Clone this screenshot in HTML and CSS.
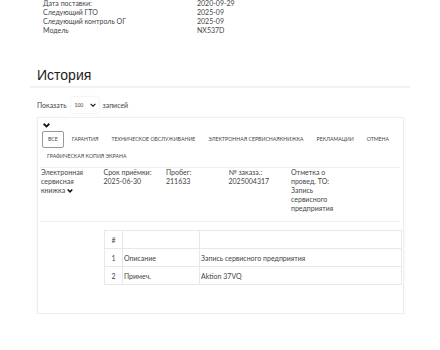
FILE: index.html
```html
<!DOCTYPE html>
<html lang="ru">
<head>
  <meta charset="UTF-8" />
  <meta name="viewport" content="width=device-width, initial-scale=1.0" />
  <title>История</title>
  <link rel="stylesheet" href="styles.css">
</head>
<body>
  <div class="details">
    <span>Дата поставки:</span><span>2020-09-29</span>
    <span>Следующий ГТО</span><span>2025-09</span>
    <span>Следующий контроль ОГ</span><span>2025-09</span>
    <span>Модель</span><span>NX537D</span>
  </div>

  <section class="history">
    <h2>История</h2>
    <div class="body">
      <div class="length">
        Показать
        <span class="select">100 <svg viewBox="0 0 10 6" width="6" height="4"><path d="M1 1l4 4 4-4" fill="none" stroke="#222" stroke-width="2"/></svg></span>
        записей
      </div>

      <div class="card">
        <div class="top">
          <svg class="chev" viewBox="0 0 10 7" width="7" height="5"><path d="M1 1l4 4 4-4" fill="none" stroke="#111" stroke-width="2.6"/></svg>
          <div class="tabs">
            <span class="tab active">Все</span>
            <span class="tab">Гарантия</span>
            <span class="tab">Техническое обслуживание</span>
            <span class="tab">Электронная сервиснаякнижка</span>
            <span class="tab">Рекламации</span>
            <span class="tab">Отмена</span>
            <span class="tab">Графическая копия экрана</span>
          </div>
        </div>

        <div class="entry">
          <div>Электронная сервисная книжка <svg viewBox="0 0 10 7" width="6" height="4"><path d="M1 1l4 4 4-4" fill="none" stroke="#111" stroke-width="2.6"/></svg></div>
          <div>Срок приёмки: 2025-06-30</div>
          <div>Пробег: 211633</div>
          <div>№ заказа.: 2025004317</div>
          <div>Отметка о провед. ТО: Запись сервисного предприятия</div>
        </div>

        <table class="lines">
          <tr><th>#</th><th></th><th></th></tr>
          <tr><td>1</td><td>Описание</td><td>Запись сервисного предприятия</td></tr>
          <tr><td>2</td><td>Примеч.</td><td>Aktion 37VQ</td></tr>
        </table>
      </div>
    </div>
  </section>
</body>
</html>
```

FILE: styles.css
```css
body {
  margin: 0;
  font-family: Lato, 'Noto Sans', sans-serif;
  font-size: 7px;
  color: #444;
  background: #fff;
}
.details {
  display: grid;
  grid-template-columns: 154px auto;
  line-height: 9px;
  margin-top: -1px;
  padding-left: 43px;
}
.history {
  margin: 30px 30px 0;
}
.history h2 {
  margin: 0;
  padding: 0 0 1px 7px;
  font-family: 'Liberation Sans', Arial, sans-serif;
  font-weight: normal;
  font-size: 14px;
  line-height: 20px;
  color: #222;
  border-bottom: 2px solid #eef3f3;
}
.body {
  margin: 0 6px 0 7px;
}
.length {
  display: flex;
  align-items: center;
  gap: 4px;
  height: 16px;
  margin: 9px 0 4px;
}
.select {
  display: inline-flex;
  align-items: center;
  justify-content: space-between;
  width: 28px;
  height: 16px;
  box-sizing: border-box;
  padding: 0 3px 0 4px;
  font-size: 5px;
  border-radius: 2px;
  box-shadow: 0 0 2px rgba(0,0,0,0.15);
}
.card {
  border: 1px solid #eee;
  box-shadow: 0 1px 3px rgba(0,0,0,0.06);
  padding: 0 3px 28px 2px;
}
.top {
  padding: 5px 0 0 2px;
  border-bottom: 1px solid #efefef;
}
.chev {
  display: block;
  margin-left: 1px;
}
.tabs {
  display: flex;
  flex-wrap: wrap;
  gap: 0 3px;
  margin: 3px 0 2px;
}
.tab {
  padding: 4px;
  line-height: 7px;
  font-size: 5.2px;
  text-transform: uppercase;
  color: #444;
  border: 1px solid transparent;
}
.tab.active {
  padding: 4px 5px;
  border-color: #999;
  border-radius: 2px;
}
.entry {
  display: grid;
  grid-template-columns: repeat(5, 62.5px);
  line-height: 9px;
  padding: 0 0 8px 1px;
  border-bottom: 1px solid #f0f0f0;
}
.entry > div {
  padding-right: 12px;
}
.lines {
  margin: 8px 0 0 64px;
  width: 298px;
  border-collapse: collapse;
}
.lines th, .lines td {
  height: 17px;
  padding: 0 1px;
  border: 1px solid #e8e8e8;
  text-align: left;
  font-weight: normal;
}
.lines th:first-child, .lines td:first-child {
  width: 15px;
  text-align: center;
}
.lines th:nth-child(2), .lines td:nth-child(2) {
  width: 74px;
}
```
